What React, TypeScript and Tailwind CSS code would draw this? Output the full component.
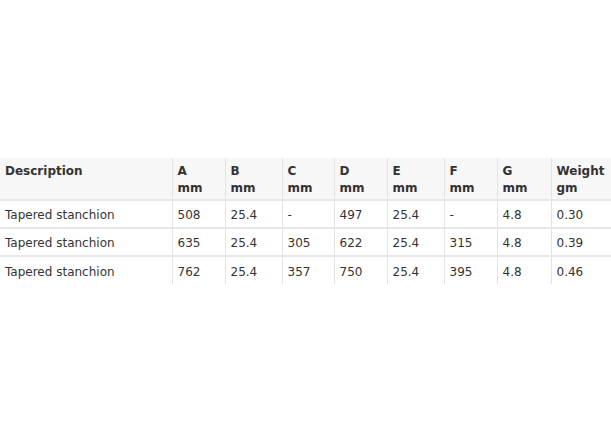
const headers = [
  { label: "Description", unit: "", w: "w-[172px]" },
  { label: "A", unit: "mm", w: "w-[53px]" },
  { label: "B", unit: "mm", w: "w-[57px]" },
  { label: "C", unit: "mm", w: "w-[52px]" },
  { label: "D", unit: "mm", w: "w-[53px]" },
  { label: "E", unit: "mm", w: "w-[57px]" },
  { label: "F", unit: "mm", w: "w-[53px]" },
  { label: "G", unit: "mm", w: "w-[54px]" },
  { label: "Weight", unit: "gm", w: "w-[60px]" },
];

const rows = [
  ["Tapered stanchion", "508", "25.4", "-", "497", "25.4", "-", "4.8", "0.30"],
  ["Tapered stanchion", "635", "25.4", "305", "622", "25.4", "315", "4.8", "0.39"],
  ["Tapered stanchion", "762", "25.4", "357", "750", "25.4", "395", "4.8", "0.46"],
];

export default function App() {
  return (
    <div className="w-[611px] h-[442px] bg-white overflow-hidden pt-[158px] font-['DejaVu_Sans',Verdana,sans-serif] text-[12px] text-[#333]">
      <table className="border-collapse table-fixed w-[611px]">
        <thead>
          <tr className="bg-[#f7f7f7]">
            {headers.map((h, i) => (
              <th
                key={h.label}
                className={`${h.w} h-[42px] align-top text-left font-bold pl-[5px] pt-[5px] leading-[17px] ${i > 0 ? "border-l border-[#e3e3e3]" : ""}`}
              >
                {h.label}
                {h.unit && (
                  <>
                    <br />
                    {h.unit}
                  </>
                )}
              </th>
            ))}
          </tr>
        </thead>
        <tbody>
          {rows.map((r, ri) => (
            <tr key={ri} className="border-t-2 border-[#e8e8e8]">
              {r.map((c, ci) => (
                <td
                  key={ci}
                  className={`h-[28px] pl-[5px] pt-[2px] align-middle ${ci > 0 ? "border-l border-[#e3e3e3]" : ""}`}
                >
                  {c}
                </td>
              ))}
            </tr>
          ))}
        </tbody>
      </table>
    </div>
  );
}
